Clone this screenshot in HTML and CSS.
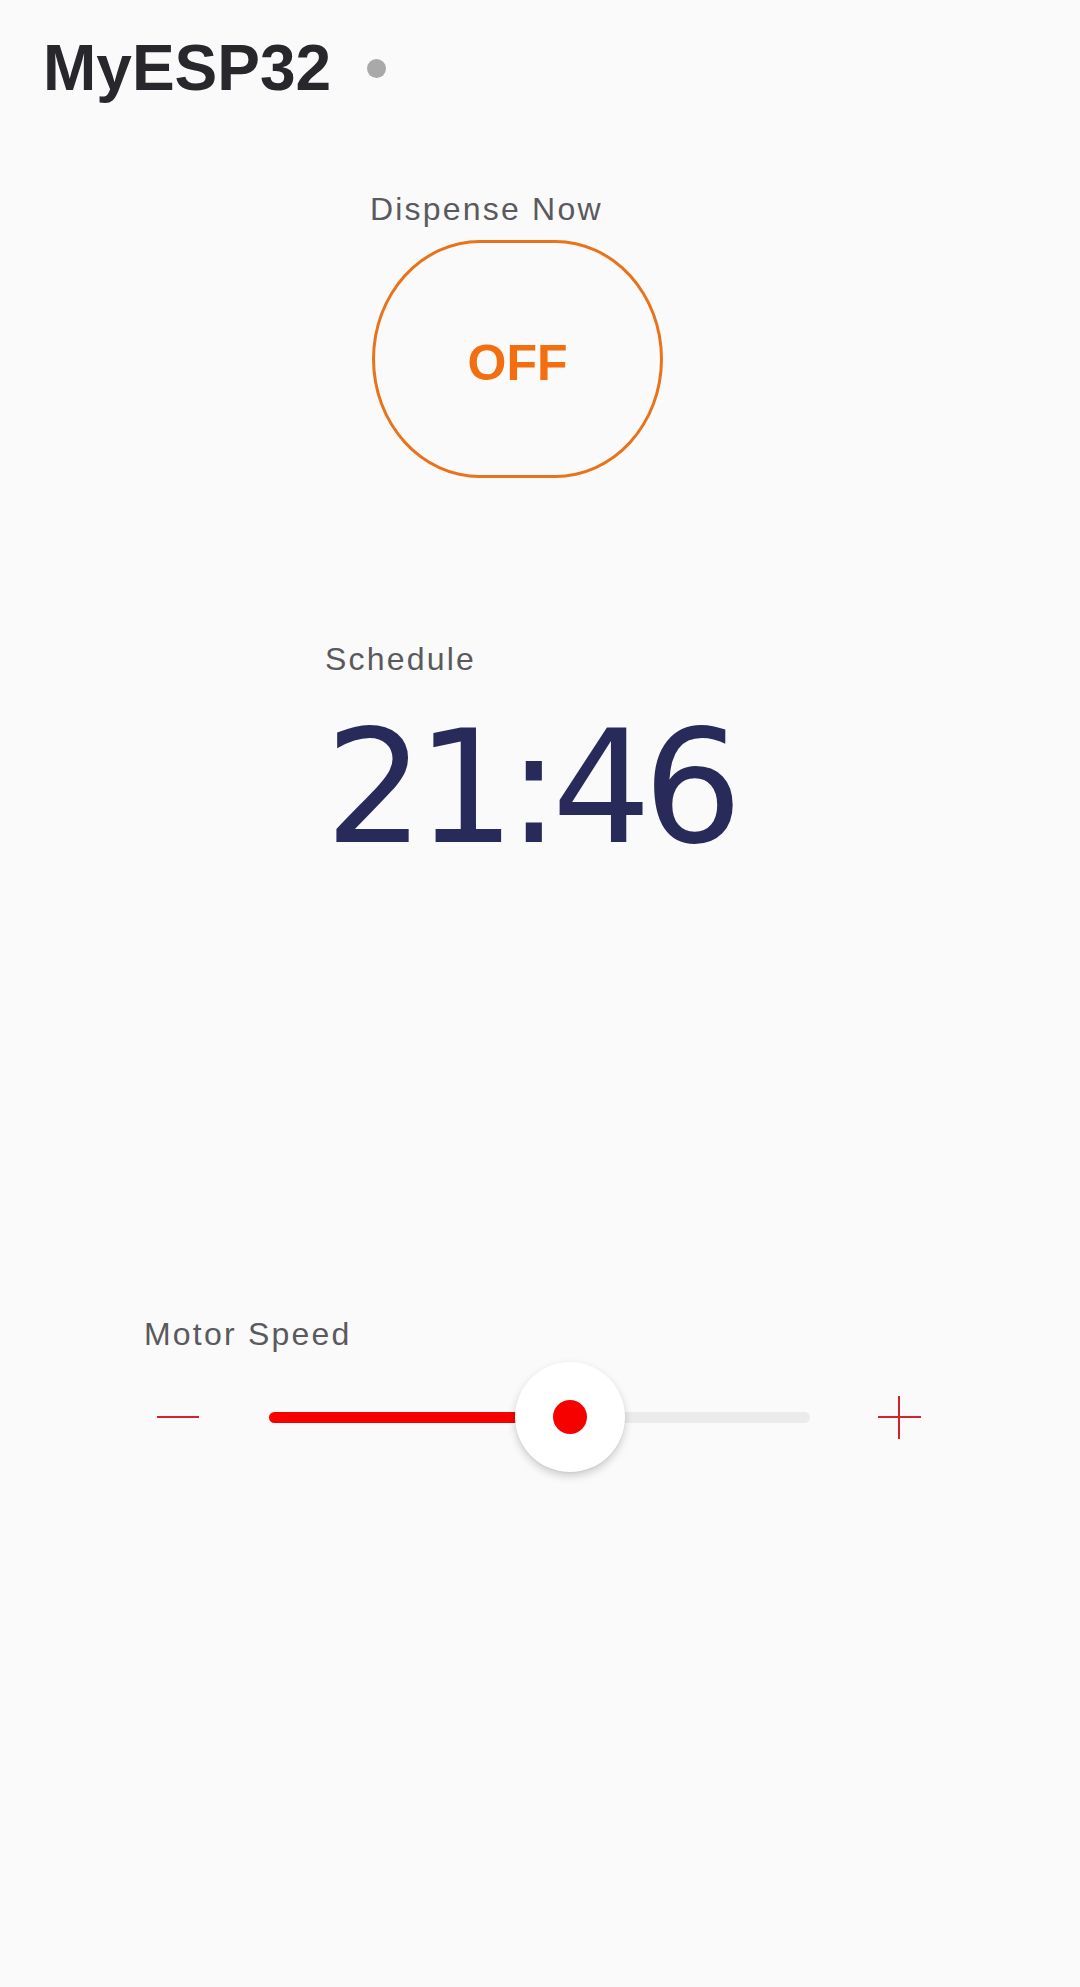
FILE: index.html
```html
<!DOCTYPE html>
<html lang="en">
<head>
<meta charset="utf-8">
<title>MyESP32</title>
<link rel="stylesheet" href="styles.css">
</head>
<body>
<header class="header">
  <h1 class="title">MyESP32</h1>
  <span class="status-dot"></span>
</header>

<section class="widget dispense">
  <div class="label">Dispense Now</div>
  <button class="toggle">OFF</button>
</section>

<section class="widget schedule">
  <div class="label">Schedule</div>
  <div class="time">21:46</div>
</section>

<section class="widget motor">
  <div class="label">Motor Speed</div>
  <div class="slider-row">
    <span class="step minus"></span>
    <div class="track">
      <div class="fill" style="width:55.6%"></div>
      <span class="thumb" style="left:55.6%"><span class="thumb-dot"></span></span>
    </div>
    <span class="step plus"></span>
  </div>
</section>
</body>
</html>
```

FILE: styles.css
```css
html, body {
  margin: 0;
  padding: 0;
  background: #fafafa;
}
body {
  font-family: "Liberation Sans", Arial, sans-serif;
  width: 1080px;
  min-height: 1987px;
}

.header {
  display: flex;
  align-items: center;
  padding: 36px 0 0 43px;
}
.title {
  margin: 0;
  font-size: 64px;
  line-height: 64px;
  font-weight: bold;
  letter-spacing: 0;
  color: #27272c;
}
.status-dot {
  width: 19px;
  height: 19px;
  border-radius: 50%;
  background: #a9a9a9;
  margin-left: 36px;
}

.label {
  font-size: 32px;
  line-height: 36px;
  letter-spacing: 2.2px;
  color: #5a5a5e;
}

.dispense {
  margin: 91px 0 0 370px;
}
.toggle {
  display: flex;
  align-items: center;
  justify-content: center;
  box-sizing: border-box;
  width: 291px;
  height: 238px;
  margin: 13px 0 0 2px;
  padding: 8px 0 0 0;
  border: 3px solid #e8731a;
  border-radius: 108px / 119px;
  background: transparent;
  font-family: "Liberation Sans", Arial, sans-serif;
  font-size: 50px;
  font-weight: bold;
  color: #f26e0e;
}

.schedule {
  margin: 163px 0 0 325px;
}
.time {
  margin-top: 33px;
  font-family: "DejaVu Sans", sans-serif;
  font-size: 156px;
  line-height: 156px;
  letter-spacing: -8px;
  color: #282b5a;
}

.motor {
  margin: 450px 0 0 144px;
}
.slider-row {
  display: flex;
  align-items: center;
  height: 110px;
  margin-top: 10px;
}
.step {
  position: relative;
  display: block;
  height: 43px;
}
.minus {
  width: 42px;
  margin-left: 13px;
}
.plus {
  width: 43px;
  margin-left: 68px;
}
.step::before,
.step::after {
  content: "";
  position: absolute;
  background: #d3222a;
}
.step::before {
  left: 0;
  right: 0;
  top: 20px;
  height: 2px;
}
.plus::after {
  top: 0;
  bottom: 0;
  left: 20px;
  width: 2px;
}
.track {
  position: relative;
  width: 541px;
  height: 11px;
  margin-left: 70px;
  border-radius: 6px;
  background: #ebebeb;
}
.fill {
  height: 100%;
  border-radius: 6px 0 0 6px;
  background: #f60000;
}
.thumb {
  position: absolute;
  top: 50%;
  width: 110px;
  height: 110px;
  margin: -55px 0 0 -55px;
  border-radius: 50%;
  background: #ffffff;
  box-shadow: 0 4px 9px rgba(0, 0, 0, 0.18), 0 1px 2px rgba(0, 0, 0, 0.06);
  display: flex;
  align-items: center;
  justify-content: center;
}
.thumb-dot {
  width: 34px;
  height: 34px;
  border-radius: 50%;
  background: #f60000;
}
```
